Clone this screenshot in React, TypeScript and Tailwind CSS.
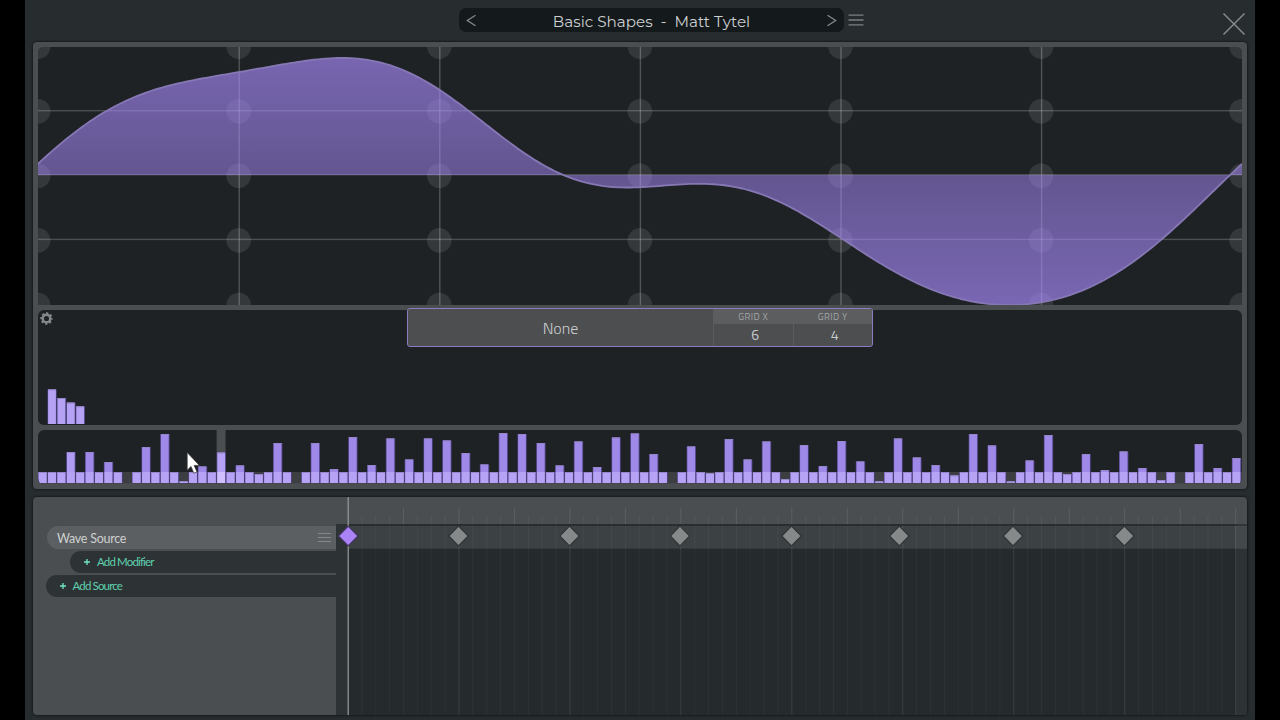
const CENTER_Y = 128;
const BASE = 11;

// Phase bars sit at BASE unless listed here
const PHASES: Record<number, number> = {
  3: 31, 5: 31, 7: 21, 9: 0, 11: 36, 13: 49, 15: 2, 17: 16.5, 19: 30.5, 21: 17.5, 23: 9, 25: 40,
  27: 0, 29: 40, 31: 14, 33: 46, 35: 18, 37: 44.5, 39: 23.5, 41: 44.5, 43: 42.5, 45: 30, 47: 18.5,
  49: 50, 51: 49, 53: 40, 55: 17.5, 57: 41.5, 59: 16, 61: 45.5, 63: 49.5, 65: 29, 67: 0, 69: 36.5,
  71: 10, 73: 44, 75: 23.5, 77: 41.5, 79: 4, 81: 38, 83: 17, 85: 42, 87: 21.5, 89: 1.5, 91: 44.5,
  93: 25.5, 95: 18, 97: 7.5, 99: 49, 101: 37.5, 103: 1.5, 105: 22.5, 107: 48, 109: 9, 111: 29,
  113: 13, 115: 31.5, 117: 15, 119: 3, 121: 0, 123: 39, 125: 15, 127: 25,
};

const BAR_STEP = 9.4;
const HARMONICS = [34.6, 26, 21.4, 17.7];
const KEYFRAMES = [110.5, 221.5, 332, 443.5, 551.3, 665, 776.3];

// One cycle of the waveform, summed from its four partials
function sampleWave(x: number) {
  const t = (x / 1204) * Math.PI * 2;
  return (
    109.2 * Math.sin(t) +
    31.3 * Math.sin(2 * t) +
    11.7 * Math.cos(3 * t) -
    8.3 * Math.sin(3 * t) +
    7.6 * Math.sin(4 * t) -
    0.5
  );
}

function wavePath() {
  const points: string[] = [];
  for (let x = 0; x <= 1204; x += 4) {
    points.push(`${x},${(CENTER_Y - sampleWave(x)).toFixed(2)}`);
  }
  return `M${points.join(' L')}`;
}

function WaveView() {
  const line = wavePath();
  const columns = [0, 1, 2, 3, 4, 5, 6];
  const rows = [0, 1, 2, 3, 4];

  return (
    <div className="h-[258px] overflow-hidden rounded-t-[5px] bg-[#1e2224]">
      <svg width="1204" height="258" viewBox="0 0 1204 258" className="block">
        <defs>
          <linearGradient id="wave-fill" x1="0" y1="0" x2="0" y2="258" gradientUnits="userSpaceOnUse">
            <stop offset="0" stopColor="#a789fb" stopOpacity="0.67" />
            <stop offset="0.5" stopColor="#a789fb" stopOpacity="0.5" />
            <stop offset="1" stopColor="#a789fb" stopOpacity="0.67" />
          </linearGradient>
        </defs>
        <g fill="#fff">
          {columns.slice(1, 6).map((c) => (
            <rect key={c} x={c * 200.6 - 0.1} y="0" width="1.4" height="258" fillOpacity="0.23" />
          ))}
          <rect x="0" y="63" width="1204" height="1.4" fillOpacity="0.2" />
          <rect x="0" y="127" width="1204" height="1.4" fillOpacity="0.2" />
          <rect x="0" y="191.7" width="1204" height="1.4" fillOpacity="0.2" />
          {columns.map((c) =>
            rows.map((r) => (
              <circle key={`${c}-${r}`} cx={c * 200.6 + 0.1} cy={r * 64.6 - 0.4} r="12.3" fillOpacity="0.1" />
            ))
          )}
        </g>
        <path d={`${line} L1204,${CENTER_Y} L0,${CENTER_Y} Z`} fill="url(#wave-fill)" />
        <path d={line} fill="none" stroke="#8678b4" strokeWidth="1.8" />
      </svg>
    </div>
  );
}

function GearIcon() {
  return (
    <svg width="13" height="13" viewBox="0 0 13 13" className="absolute top-[2px] left-[2px]">
      <circle cx="6.5" cy="6.5" r="3.8" fill="none" stroke="#85888a" strokeWidth="2.5" />
      <circle
        cx="6.5"
        cy="6.5"
        r="5.4"
        fill="none"
        stroke="#85888a"
        strokeWidth="1.6"
        strokeDasharray="2.3 1.94"
        strokeDashoffset="1.15"
      />
    </svg>
  );
}

function GridField({ label, value }: { label: string; value: string }) {
  return (
    <div className="flex w-[79.5px] flex-col border-l border-[#5a5c5e] text-center">
      <div className="h-[15px] bg-[#5b5d5f] text-[9.5px] leading-[15px] tracking-[0.4px] text-[#a3a5a7]">
        {label}
      </div>
      <div className="pl-[4px] text-[14px] leading-[21px]">{value}</div>
    </div>
  );
}

function HarmonicsView() {
  return (
    <div className="relative h-[115px] rounded-[6px] bg-[#1e2224]">
      <svg width="1204" height="115" viewBox="0 0 1204 115" className="block">
        {HARMONICS.map((h, i) => (
          <g key={i}>
            <rect x={(i + 1) * BAR_STEP} y={114 - h} width="9.4" height={h} fill="#4d4283" />
            <rect x={(i + 1) * BAR_STEP + 0.7} y={114 - h} width="7.8" height={h} fill="#b6a2f5" />
            <rect x={(i + 1) * BAR_STEP + 0.7} y={114 - h} width="7.8" height="1" fill="#9385c6" />
          </g>
        ))}
      </svg>
      <GearIcon />
      <div className="absolute -top-0.5 left-[369px] flex h-[39px] w-[466px] rounded-[3px] border-[1.5px] border-[#8b7bbf] bg-[#4c4e50] font-['Titillium_Web','Lato',sans-serif] text-[#c9cccd]">
        <div className="flex flex-1 items-center justify-center text-[16px] font-light">None</div>
        <GridField label="GRID X" value="6" />
        <GridField label="GRID Y" value="4" />
      </div>
    </div>
  );
}

function PhaseView() {
  return (
    <div className="relative h-[54px]">
      <svg width="1204" height="54" viewBox="0 0 1204 54" className="block rounded-[6px] bg-[#1e2224]">
        <rect x="0" y="42" width="1204" height="12" fill="#3c3e41" />
        <rect x={19 * BAR_STEP} y="0" width="9" height="54" fill="#4b4e50" />
        {Array.from({ length: 128 }, (_, i) => {
          const h = PHASES[i] ?? BASE;
          if (h === 0) return null;
          const x = i * BAR_STEP;
          const upper = i === 3 ? '#b09cf2' : i === 19 ? '#b5a1f5' : '#9f89e8';
          const lower = i === 19 ? '#d1c0ff' : '#b7a3f5';
          return (
            <g key={i}>
              <rect x={x} y={53 - h} width="9.4" height={h} fill="#4f4484" />
              <rect x={x + 0.7} y={53 - h} width="7.8" height={h} fill={upper} />
              <rect x={x + 0.7} y={53 - Math.min(h, BASE)} width="7.8" height={Math.min(h, BASE)} fill={lower} />
              <rect x={x + 0.7} y={53 - h} width="7.8" height="1" fill="#9486c8" />
            </g>
          );
        })}
        <rect x="0" y="53" width="1204" height="1" fill="#45464d" />
      </svg>
      <svg width="16" height="24" viewBox="0 0 16 24" className="absolute top-[21px] left-[148px]">
        <path
          d="M1.2 1.5v17.7l3.8-3.7 2.9 6.7 3.1-1.3-2.9-6.5h5.3z"
          fill="#fff"
          stroke="#333"
          strokeWidth="0.7"
        />
      </svg>
    </div>
  );
}

function AddButton({ label, className }: { label: string; className: string }) {
  return (
    <div className={`flex h-[22px] items-center gap-[7px] rounded-l-full bg-[#2d3234] text-[11.5px] tracking-[-0.85px] text-[#5fd0ae] ${className}`}>
      <svg width="6" height="6" viewBox="0 0 6 6" stroke="#72e8c4" strokeWidth="1.3">
        <path d="M3 0v6M0 3h6" />
      </svg>
      <span>{label}</span>
    </div>
  );
}

function SourceList() {
  return (
    <div className="flex w-[303px] flex-col pt-[29px] font-['Lato',sans-serif]">
      <div className="ml-[14px] flex h-[23px] items-center justify-between rounded-l-full bg-[#5c5f61] pr-1 pl-2.5 text-[12.5px] tracking-[-0.25px] text-[#cdcfd0]">
        <span className="pt-[3px]">Wave Source</span>
        <svg width="15" height="11" viewBox="0 0 15 11" stroke="#85888a" strokeWidth="1">
          <path d="M1 1.5h13M1 5.5h13M1 9.5h13" />
        </svg>
      </div>
      <AddButton label="Add Modifier" className="mt-0.5 ml-[37px] pl-[14px]" />
      <AddButton label="Add Source" className="mt-[2px] ml-[13px] pl-[13.5px]" />
    </div>
  );
}

function Timeline() {
  const ticks = Array.from({ length: 64 }, (_, i) => i + 1);

  return (
    <svg width="911" height="218" viewBox="0 0 911 218" className="block">
      <rect x="0" y="27" width="911" height="2" fill="#292d30" />
      <rect x="0" y="29" width="911" height="22.5" fill="#3c4244" />
      <rect x="0" y="51.5" width="911" height="166.5" fill="#252a2c" />
      <rect x="0" y="27" width="12" height="191" fill="#2d3234" />
      {ticks.map((i) => {
        const x = 11.5 + i * 13.87;
        const major = i % 4 === 0;
        return (
          <g key={i} fill="#fff">
            <rect x={x} y={major ? 11 : 19} width="1" height={major ? 16 : 8} fillOpacity={major ? 0.1 : 0.06} />
            <rect x={x} y="29" width="1" height="189" fillOpacity={i % 8 === 0 ? 0.1 : 0.04} />
          </g>
        );
      })}
      <rect x="899.5" y="27" width="12" height="191" fill="#fff" fillOpacity="0.04" />
      <rect x="11.6" y="0" width="1.2" height="218" fill="#989c9d" />
      <path d="M12.2 29.2l9.8 9.8-9.8 9.8L2.4 39z" fill="#aa83f7" stroke="#40355c" strokeWidth="1.2" />
      {KEYFRAMES.map((k) => (
        <path
          key={k}
          d={`M${12 + k} 29.2l9.8 9.8-9.8 9.8-9.8-9.8z`}
          fill="#85898a"
          stroke="#303436"
          strokeWidth="1.2"
        />
      ))}
    </svg>
  );
}

function TopBar() {
  return (
    <header className="relative flex h-[42px] pt-2 pl-[434px]">
      <div className="flex h-6 w-[385px] items-center justify-between rounded-[7px] bg-[#14191c] px-[7px]">
        <svg width="11" height="13" viewBox="0 0 11 13" fill="none" stroke="#85898b" strokeWidth="1.3">
          <path d="M9.5 1.2L1.3 6.5l8.2 5.3" />
        </svg>
        <span className="pt-[4px] font-['Montserrat','Open_Sans',sans-serif] text-[15.2px] whitespace-pre text-[#cdd0d1]">
          Basic Shapes  -  Matt Tytel
        </span>
        <svg width="11" height="13" viewBox="0 0 11 13" fill="none" stroke="#85898b" strokeWidth="1.3">
          <path d="M1.5 1.2l8.2 5.3-8.2 5.3" />
        </svg>
      </div>
      <svg width="16" height="12" viewBox="0 0 16 12" className="mt-[6px] ml-1" stroke="#7b8082" strokeWidth="1.3">
        <path d="M0.5 1.2h15M0.5 6h15M0.5 10.8h15" />
      </svg>
      <svg width="24" height="24" viewBox="0 0 24 24" className="absolute top-3 right-[9px]">
        <path d="M1.5 1.5l21 21M22.5 1.5l-21 21" stroke="#8a8e90" strokeWidth="1.4" />
      </svg>
    </header>
  );
}

export default function App() {
  return (
    <div className="h-[720px] w-[1280px] overflow-hidden bg-black px-[25px]">
      <div className="h-full bg-[#272c2e]">
        <TopBar />
        <main className="flex flex-col gap-2 px-2">
          <section className="flex h-[447px] flex-col gap-[5px] rounded-[4px] bg-[#4b4e50] p-[5px] shadow-[0_0_2px_1px_#171b1d]">
            <WaveView />
            <HarmonicsView />
            <PhaseView />
          </section>
          <section className="flex h-[218px] overflow-hidden rounded-[4px] bg-[#4b4e50] shadow-[0_0_2px_1px_#171b1d]">
            <SourceList />
            <Timeline />
          </section>
        </main>
      </div>
    </div>
  );
}
